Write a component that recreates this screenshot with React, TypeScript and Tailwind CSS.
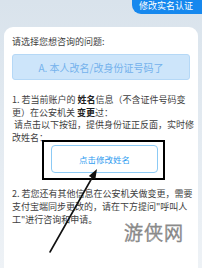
import React from "react";

export default function App() {
  const font = { fontFamily: '"Noto Sans CJK SC", "Noto Sans", sans-serif' };
  return (
    <div
      className="relative w-[202px] h-[268px] overflow-hidden bg-gradient-to-b from-[#d9e3ec] to-[#eef2f6]"
      style={font}
    >
      <div className="flex justify-end">
        <div className="-mt-[8px] h-[22px] w-[70px] rounded-bl-[9px] rounded-tl-[9px] bg-[#1688ee] pt-[8px] pl-[7px] text-[9px] leading-[11px] text-white whitespace-nowrap">
          修改实名认证
        </div>
      </div>
      <div className="mx-[4px] mt-[13px] h-[260px] rounded-[9px] bg-white px-[8px] pt-[9px] text-[#3e3e3e]">
        <div className="text-[9px] leading-[12px] whitespace-nowrap">请选择您想咨询的问题:</div>
        <div className="mt-[6px] flex h-[26px] items-center justify-center rounded-[3px] border border-[#b5d8f6] bg-[#cde5fa] text-[10px] text-[#74b2ec] whitespace-nowrap">
          A. 本人改名/改身份证号码了
        </div>
        <div className="mt-[14px] text-[9px] leading-[12.5px] whitespace-nowrap">
          <div>1. 若当前账户的 <span className="font-bold text-[#222]">姓名</span>信息（不含证件号码变</div>
          <div>更）在公安机关 <span className="font-bold text-[#222]">变更</span>过：</div>
          <div>&nbsp;请点击以下按钮，提供身份证正反面，实时修</div>
          <div>改姓名：</div>
        </div>
        <div className="relative mt-[1px] ml-[39px] flex h-[28px] w-[107px] items-center justify-center rounded-[4px] border border-[#8ccaf5] text-[8.5px] text-[#2f9cf0] whitespace-nowrap">
          点击修改姓名
          <div className="absolute -left-[10px] -top-[6px] -right-[8px] -bottom-[8px] border-2 border-black"></div>
        </div>
        <div className="mt-[14px] text-[9px] leading-[13px] whitespace-nowrap">
          <div>2. 若您还有其他信息在公安机关做变更，需要</div>
          <div>支付宝端同步更改的，请在下方提问"呼叫人</div>
          <div>工"进行咨询和申请。</div>
        </div>
      </div>
      <div
        className="absolute left-[124px] top-[219px] text-[19px] font-light leading-[26px] tracking-[1px] text-white whitespace-nowrap [-webkit-text-stroke:0.8px_#8a8a8a]"
        style={{ fontFamily: '"Noto Sans CJK SC", serif' }}
      >
        游侠网
      </div>
      <svg className="pointer-events-none absolute left-0 top-0" width="202" height="268" viewBox="0 0 202 268">
        <line x1="50" y1="252" x2="92.5" y2="177" stroke="#111" strokeWidth="1.6" strokeLinecap="round" />
        <polygon points="97,169 95.3,179.6 88.8,175.9" fill="#111" />
      </svg>
    </div>
  );
}
